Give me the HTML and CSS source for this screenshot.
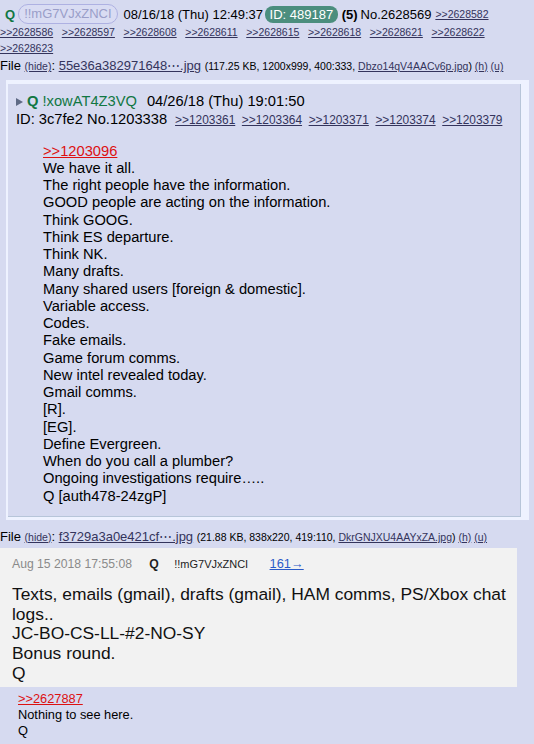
FILE: index.html
```html
<!DOCTYPE html>
<html>
<head>
<meta charset="utf-8">
<link rel="stylesheet" href="styles.css">
</head>
<body>
<div class="thread">
  <div class="posthead">
    <span class="op-name">Q</span>
    <span class="trip-pill">!!mG7VJxZNCI</span>
    <span class="date">08/16/18 (Thu) 12:49:37</span>
    <span class="id-pill">ID: 489187</span>
    <span class="count">(5)</span>
    <span class="postno">No.2628569</span>
    <a class="backlink">&gt;&gt;2628582</a>
  </div>
  <div class="backlinks">
    <a class="backlink">&gt;&gt;2628586</a><a class="backlink">&gt;&gt;2628597</a><a class="backlink">&gt;&gt;2628608</a><a class="backlink">&gt;&gt;2628611</a><a class="backlink">&gt;&gt;2628615</a><a class="backlink">&gt;&gt;2628618</a><a class="backlink">&gt;&gt;2628621</a><a class="backlink">&gt;&gt;2628622</a><a class="backlink">&gt;&gt;2628623</a>
  </div>
  <div class="file">File <a class="small-link">(hide)</a>: <a class="file-link">55e36a382971648⋯.jpg</a> <span class="file-info">(117.25 KB, 1200x999, 400:333, <a class="small-link">Dbzo14qV4AACv6p.jpg</a>) <a class="small-link">(h)</a> <a class="small-link">(u)</a></span></div>

  <div class="inline-frame">
    <div class="inline-post">
      <div class="ip-head">
        <svg class="tri" width="7" height="8" viewBox="0 0 7 8"><path d="M0 0 L7 4 L0 8 Z" fill="#5f6a85"/></svg><span class="ip-name">Q</span> <span class="ip-trip">!xowAT4Z3VQ</span><span class="ip-date">04/26/18 (Thu) 19:01:50</span>
      </div>
      <div class="ip-head">
        ID: 3c7fe2 No.1203338<span class="ip-links"><a class="ip-backlink">&gt;&gt;1203361</a><a class="ip-backlink">&gt;&gt;1203364</a><a class="ip-backlink">&gt;&gt;1203371</a><a class="ip-backlink">&gt;&gt;1203374</a><a class="ip-backlink">&gt;&gt;1203379</a></span>
      </div>
      <div class="ip-body">
        <a class="quote-red">&gt;&gt;1203096</a><br>
        We have it all.<br>
        The right people have the information.<br>
        GOOD people are acting on the information.<br>
        Think GOOG.<br>
        Think ES departure.<br>
        Think NK.<br>
        Many drafts.<br>
        Many shared users [foreign &amp; domestic].<br>
        Variable access.<br>
        Codes.<br>
        Fake emails.<br>
        Game forum comms.<br>
        New intel revealed today.<br>
        Gmail comms.<br>
        [R].<br>
        [EG].<br>
        Define Evergreen.<br>
        When do you call a plumber?<br>
        Ongoing investigations require…..<br>
        Q [auth478-24zgP]
      </div>
    </div>
  </div>

  <div class="file file-second">File <a class="small-link">(hide)</a>: <a class="file-link">f3729a3a0e421cf⋯.jpg</a> <span class="file-info">(21.88 KB, 838x220, 419:110, <a class="small-link">DkrGNJXU4AAYxZA.jpg</a>) <a class="small-link">(h)</a> <a class="small-link">(u)</a></span></div>

  <div class="card">
    <div class="card-head">
      <span class="card-date">Aug 15 2018 17:55:08</span>
      <span class="card-q">Q</span>
      <span class="card-trip">!!mG7VJxZNCI</span>
      <a class="card-link">161→</a>
    </div>
    <div class="card-text">
      Texts, emails (gmail), drafts (gmail), HAM comms, PS/Xbox chat logs..<br>
      JC-BO-CS-LL-#2-NO-SY<br>
      Bonus round.<br>
      Q
    </div>
  </div>

  <div class="reply-body">
    <a class="quote-red">&gt;&gt;2627887</a><br>
    Nothing to see here.<br>
    Q
  </div>
</div>
</body>
</html>
```

FILE: styles.css
```css
html, body {
  margin: 0;
  padding: 0;
  background: #d6daf0;
}

body {
  font-family: "Liberation Sans", Arial, sans-serif;
  font-size: 13px;
  color: #000;
  width: 534px;
  height: 744px;
  overflow: hidden;
}

.posthead {
  display: flex;
  align-items: center;
  height: 20px;
  margin-top: 4px;
  padding-left: 5px;
  white-space: nowrap;
}

.op-name {
  color: #117743;
  font-weight: bold;
}

.trip-pill {
  margin-left: 3px;
  height: 18px;
  line-height: 18px;
  padding: 0 5px;
  border: 1px solid #aeb1e2;
  border-radius: 10px;
  color: #9a9ec9;
  background: #d9dcf3;
}

.date {
  margin-left: 6px;
}

.id-pill {
  margin-left: 2px;
  height: 17px;
  line-height: 17px;
  padding: 0 4.5px;
  border-radius: 8px;
  background: #4b8e7e;
  color: #fff;
}

.count {
  margin-left: 4px;
  font-weight: bold;
}

.postno {
  margin-left: 3px;
}

.backlink {
  font-size: 10.5px;
  color: #34345c;
  text-decoration: underline;
  margin-left: 4px;
}

.backlinks {
  line-height: 16px;
}

.backlinks .backlink {
  margin-left: 0;
  margin-right: 8.6px;
  display: inline-block;
}

.file {
  margin-top: 2px;
  line-height: 16px;
  white-space: nowrap;
}

.small-link {
  font-size: 10.5px;
  color: #34345c;
  text-decoration: underline;
}

.file-link {
  color: #34345c;
  text-decoration: underline;
}

.file-info {
  font-size: 10.5px;
}

.inline-frame {
  margin: 6px 5px 0 6px;
  padding: 4px 8px 3px 2px;
  background: #eef2ff;
}

.inline-post {
  background: #d6daf0;
  border-right: 1px solid #b7c5d9;
  border-bottom: 1px solid #b7c5d9;
  padding: 8px 8px 11px 8px;
  font-size: 14.7px;
}

.ip-head {
  line-height: 18px;
  white-space: nowrap;
}

.tri {
  margin-right: 4px;
  vertical-align: 0;
}

.ip-name {
  color: #117743;
  font-weight: bold;
}

.ip-trip {
  color: #117743;
}

.ip-date {
  margin-left: 10px;
}

.ip-links {
  margin-left: 8px;
}

.ip-backlink {
  font-size: 11.9px;
  color: #34345c;
  text-decoration: underline;
  margin-right: 6.6px;
}

.ip-body {
  margin: 13.5px 0 0 27px;
  line-height: 17.25px;
}

.quote-red {
  color: #dd1111;
  text-decoration: underline;
}

.file-second {
  margin-top: 9px;
}

.card {
  margin-top: 3px;
  width: 517px;
  box-sizing: border-box;
  background: #f2f2f2;
  padding: 8px 0 3px 12px;
}

.card-head {
  font-size: 12.2px;
  line-height: 16px;
  color: #222;
  white-space: nowrap;
}

.card-date {
  color: #8a8a8a;
}

.card-q {
  font-weight: bold;
  margin-left: 14px;
}

.card-trip {
  margin-left: 12px;
  font-size: 11px;
}

.card-link {
  margin-left: 18px;
  font-size: 12.8px;
  color: #2a5bc8;
  text-decoration: underline;
}

.card-text {
  margin-top: 13px;
  font-size: 17.4px;
  line-height: 19.75px;
  color: #111;
}

.reply-body {
  padding: 4px 0 0 18px;
  font-size: 12.8px;
  line-height: 16px;
}
```
